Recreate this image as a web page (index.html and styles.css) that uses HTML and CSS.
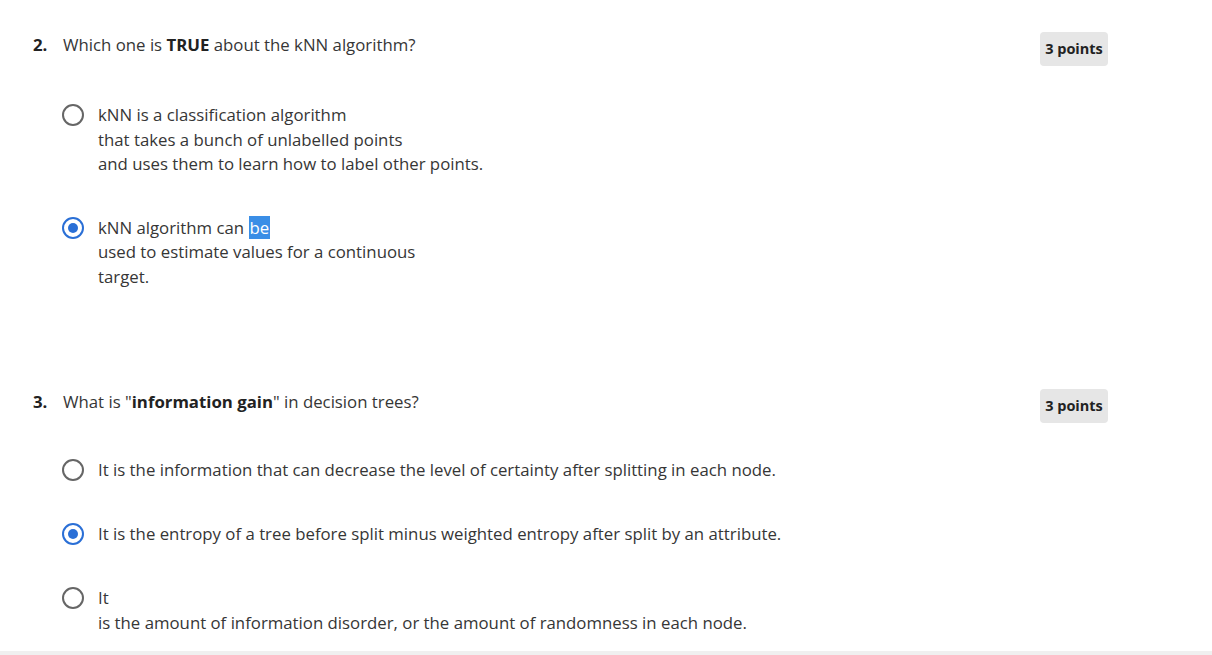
FILE: index.html
```html
<!DOCTYPE html>
<html>
<head>
<meta charset="utf-8">
<link rel="stylesheet" href="styles.css">
</head>
<body>
<div class="page">
  <section class="question q2">
    <div class="q-head">
      <span class="q-num">2.</span>
      <span class="q-text">Which one is <b>TRUE</b> about the kNN algorithm?</span>
      <span class="badge">3 points</span>
    </div>
    <div class="options">
      <div class="option">
        <span class="radio"></span>
        <div class="opt-text">kNN is a classification algorithm<br>that takes a bunch of unlabelled points<br>and uses them to learn how to label other points.</div>
      </div>
      <div class="option">
        <span class="radio checked"></span>
        <div class="opt-text">kNN algorithm can <span class="sel">be</span><br>used to estimate values for a continuous<br>target.</div>
      </div>
    </div>
  </section>
  <section class="question q3">
    <div class="q-head">
      <span class="q-num">3.</span>
      <span class="q-text">What is "<b>information gain</b>" in decision trees?</span>
      <span class="badge">3 points</span>
    </div>
    <div class="options">
      <div class="option">
        <span class="radio"></span>
        <div class="opt-text">It is the information that can decrease the level of certainty after splitting in each node.</div>
      </div>
      <div class="option">
        <span class="radio checked"></span>
        <div class="opt-text">It is the entropy of a tree before split minus weighted entropy after split by an attribute.</div>
      </div>
      <div class="option">
        <span class="radio"></span>
        <div class="opt-text">It<br>is the amount of information disorder, or the amount of randomness in each node.</div>
      </div>
    </div>
  </section>
</div>
<div class="footer-strip"></div>
</body>
</html>
```

FILE: styles.css
```css
html, body {
  margin: 0;
  padding: 0;
  background: #ffffff;
}
body {
  font-family: "Open Sans", "Noto Sans", sans-serif;
  font-size: 16.8px;
  color: #363636;
  height: 655px;
  overflow: hidden;
  display: flex;
  flex-direction: column;
}
.page {
  flex: 1;
  padding: 33px 104px 0 33px;
}
.q-head {
  display: flex;
  align-items: flex-start;
  line-height: 24px;
}
.q-num {
  width: 30px;
  font-weight: 700;
  color: #222222;
}
.q-text {
  flex: 1;
}
.q-text b {
  color: #222222;
}
.badge {
  margin-top: -1px;
  background: #e6e6e6;
  border-radius: 4px;
  padding: 5px 0;
  font-size: 14.5px;
  font-weight: 700;
  color: #222222;
  width: 68px;
  text-align: center;
}
.options {
  display: flex;
  flex-direction: column;
  gap: 39px;
  padding-left: 29px;
  margin-top: 37px;
}
.option {
  display: flex;
  align-items: flex-start;
  gap: 14px;
  line-height: 24.5px;
}
.radio {
  flex: none;
  width: 22px;
  height: 22px;
  margin-top: 1px;
  box-sizing: border-box;
  border: 2px solid #666666;
  border-radius: 50%;
  background: #fff;
  position: relative;
}
.radio.checked {
  border-color: #2a6fd6;
  border-width: 2.5px;
}
.radio.checked::after {
  content: "";
  position: absolute;
  left: 50%;
  top: 50%;
  width: 10px;
  height: 10px;
  margin: -5px 0 0 -5px;
  border-radius: 50%;
  background: #2a6fd6;
}
.sel {
  background: #3a8ee6;
  color: #ffffff;
  padding: 0 1px;
}
.q3 {
  margin-top: 101px;
}
.q3 .options {
  margin-top: 35px;
  gap: 39.5px;
}
.footer-strip {
  height: 4px;
  background: #f0f0f0;
}
```
